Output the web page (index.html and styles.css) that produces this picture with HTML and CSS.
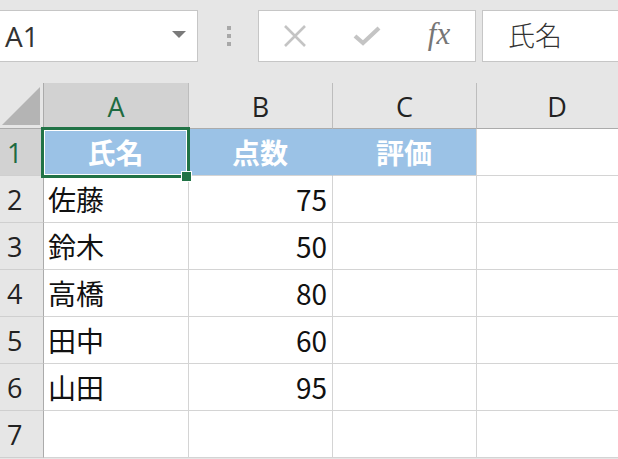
FILE: index.html
```html
<!DOCTYPE html>
<html lang="ja">
<head>
<meta charset="utf-8">
<link rel="stylesheet" href="styles.css">
</head>
<body>
<div class="toolbar">
  <div class="namebox">
    <span class="ref">A1</span>
    <span class="drop"></span>
  </div>
  <div class="grip"><i></i><i></i><i></i></div>
  <div class="fbuttons">
    <span class="fbtn">
      <svg width="24" height="22" viewBox="0 0 24 22"><path d="M2 1 L22 21 M22 1 L2 21" stroke="#c4c4c4" stroke-width="2.6" fill="none"/></svg>
    </span>
    <span class="fbtn">
      <svg width="28" height="20" viewBox="0 0 28 20"><path d="M2 10 L10 17 L26 2" stroke="#c4c4c4" stroke-width="4.2" fill="none"/></svg>
    </span>
    <span class="fbtn fx">fx</span>
  </div>
  <div class="formula">氏名</div>
</div>

<div class="sheet">
  <div class="grid">
    <div class="corner"><span class="tri"></span></div>
    <div class="colhead sel">A</div>
    <div class="colhead">B</div>
    <div class="colhead">C</div>
    <div class="colhead last">D</div>

    <div class="rowhead sel">1</div>
    <div class="cell fill head">氏名</div>
    <div class="cell fill head">点数</div>
    <div class="cell fill head">評価</div>
    <div class="cell last"></div>

    <div class="rowhead">2</div>
    <div class="cell">佐藤</div>
    <div class="cell num">75</div>
    <div class="cell"></div>
    <div class="cell last"></div>

    <div class="rowhead">3</div>
    <div class="cell">鈴木</div>
    <div class="cell num">50</div>
    <div class="cell"></div>
    <div class="cell last"></div>

    <div class="rowhead">4</div>
    <div class="cell">高橋</div>
    <div class="cell num">80</div>
    <div class="cell"></div>
    <div class="cell last"></div>

    <div class="rowhead">5</div>
    <div class="cell">田中</div>
    <div class="cell num">60</div>
    <div class="cell"></div>
    <div class="cell last"></div>

    <div class="rowhead">6</div>
    <div class="cell">山田</div>
    <div class="cell num">95</div>
    <div class="cell"></div>
    <div class="cell last"></div>

    <div class="rowhead">7</div>
    <div class="cell"></div>
    <div class="cell"></div>
    <div class="cell"></div>
    <div class="cell last"></div>
  </div>
  <div class="selection"></div>
  <div class="handle"></div>
</div>
</body>
</html>
```

FILE: styles.css
```css
html, body {
  margin: 0;
  padding: 0;
}
body {
  background: #e6e6e6;
  width: 618px;
  height: 459px;
  overflow: hidden;
  font-family: "Noto Sans CJK JP", "Noto Sans", sans-serif;
}

/* ---------- toolbar ---------- */
.toolbar {
  display: flex;
  align-items: flex-start;
  height: 83px;
  padding-top: 10px;
  box-sizing: border-box;
}
.namebox {
  width: 198px;
  height: 52px;
  box-sizing: border-box;
  background: #fff;
  border: 1px solid #c6c6c6;
  border-left: none;
  display: flex;
  align-items: center;
  justify-content: space-between;
  padding: 0 11px 0 5px;
  flex-shrink: 0;
}
.ref {
  font-family: "Open Sans", "Liberation Sans", sans-serif;
  font-size: 28px;
  color: #333;
  letter-spacing: 0;
}
.drop {
  width: 0;
  height: 0;
  border-left: 7px solid transparent;
  border-right: 7px solid transparent;
  border-top: 7px solid #7a7a7a;
  margin-top: -4px;
}
.grip {
  display: flex;
  flex-direction: column;
  gap: 4px;
  margin-left: 29px;
  margin-top: 16px;
  flex-shrink: 0;
}
.grip i {
  display: block;
  width: 4px;
  height: 4px;
  background: #a8a8a8;
}
.fbuttons {
  margin-left: 27px;
  width: 218px;
  height: 52px;
  box-sizing: border-box;
  background: #fff;
  border: 1px solid #c6c6c6;
  display: grid;
  grid-template-columns: repeat(3, 1fr);
  align-items: center;
  justify-items: center;
  flex-shrink: 0;
}
.fbtn {
  display: flex;
  align-items: center;
  justify-content: center;
}
.fbtn svg { display: block; }
.fx {
  font-family: "Liberation Serif", serif;
  font-style: italic;
  font-size: 31px;
  color: #767676;
  margin-top: -4px;
}
.formula {
  margin-left: 6px;
  flex: 1 0 160px;
  height: 52px;
  box-sizing: border-box;
  background: #fff;
  border: 1px solid #c6c6c6;
  border-right: none;
  padding-left: 25px;
  font-size: 27px;
  font-weight: 300;
  color: #333;
  line-height: 48px;
}

/* ---------- sheet ---------- */
.sheet {
  position: relative;
}
.grid {
  display: grid;
  grid-template-columns: 44px 145px 144px 144px 160px;
  grid-template-rows: 46px repeat(7, 47px);
}
.grid > div {
  box-sizing: border-box;
  display: flex;
  align-items: center;
}
.corner {
  background: #e6e6e6;
  border-right: 1px solid #ababab;
  border-bottom: 1px solid #ababab;
  position: relative;
}
.tri {
  position: absolute;
  left: 2px;
  top: 4px;
  width: 38px;
  height: 38px;
  background: #b4b4b4;
  clip-path: polygon(100% 0, 100% 100%, 0 100%);
}
.colhead {
  background: #e6e6e6;
  border-right: 1px solid #bdbdbd;
  border-bottom: 1px solid #ababab;
  justify-content: center;
  font-family: "Open Sans", "Liberation Sans", sans-serif;
  font-size: 27px;
  color: #222;
  padding-top: 2px;
}
.colhead.sel {
  background: #d2d2d2;
  color: #1e6b41;
}
.rowhead {
  background: #e6e6e6;
  border-right: 1px solid #ababab;
  border-bottom: 1px solid #cfcfcf;
  padding-left: 7px;
  font-family: "Open Sans", "Liberation Sans", sans-serif;
  font-size: 27px;
  color: #222;
}
.rowhead.sel {
  background: #d2d2d2;
  color: #1e6b41;
}
.cell {
  background: #fff;
  border-right: 1px solid #d4d4d4;
  border-bottom: 1px solid #d4d4d4;
  font-size: 28px;
  color: #111;
  padding: 0 5px 0 4px;
  white-space: nowrap;
}
.cell.num {
  justify-content: flex-end;
}
.cell.fill {
  background: #9bc2e6;
  border-right-color: #9bc2e6;
  border-bottom-color: #d4d4d4;
}
.cell.fill:nth-child(9) {
  border-right-color: #d4d4d4;
}
.cell.head {
  justify-content: center;
  color: #fff;
  font-weight: 700;
}
.last {
  border-right: none;
}

.selection {
  position: absolute;
  left: 41px;
  top: 44px;
  width: 149px;
  height: 51px;
  box-sizing: border-box;
  border: 3px solid #217346;
  box-shadow: inset 0 0 0 1px #fff;
}
.handle {
  position: absolute;
  left: 181px;
  top: 88px;
  width: 11px;
  height: 11px;
  box-sizing: border-box;
  background: #217346;
  border: 1px solid #fff;
}
```
